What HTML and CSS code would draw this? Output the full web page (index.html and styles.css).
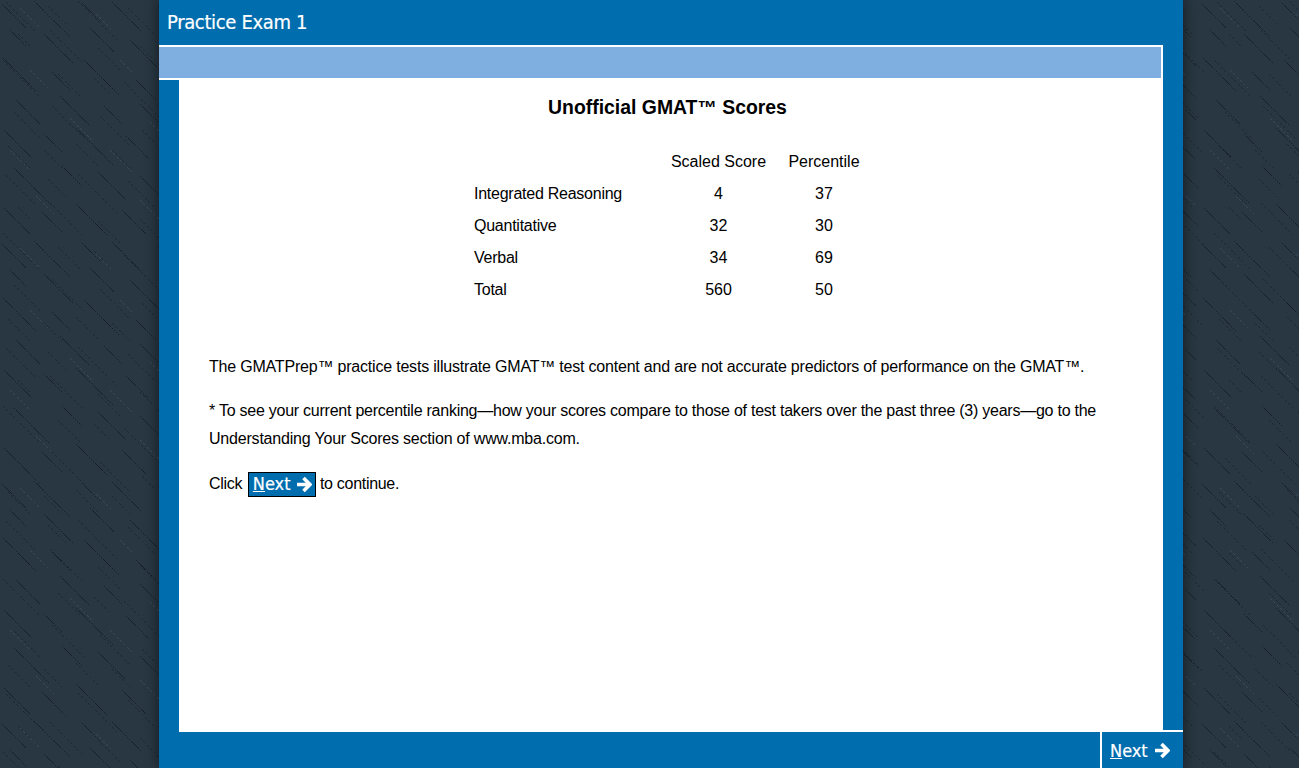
FILE: index.html
```html
<!DOCTYPE html>
<html lang="en">
<head>
<meta charset="utf-8">
<title>Practice Exam 1</title>
<link rel="stylesheet" href="styles.css">
</head>
<body>
<div class="frame">
  <header class="title">Practice Exam 1</header>
  <div class="band"></div>
  <main class="main">
    <h1 class="heading">Unofficial GMAT™ Scores</h1>
    <table class="scores">
      <colgroup><col class="col-name"><col class="col-num"><col class="col-num2"></colgroup>
      <tr><th></th><th>Scaled Score</th><th>Percentile</th></tr>
      <tr><td>Integrated Reasoning</td><td>4</td><td>37</td></tr>
      <tr><td>Quantitative</td><td>32</td><td>30</td></tr>
      <tr><td>Verbal</td><td>34</td><td>69</td></tr>
      <tr><td>Total</td><td>560</td><td>50</td></tr>
    </table>
    <p class="note first">The GMATPrep™ practice tests illustrate GMAT™ test content and are not accurate predictors of performance on the GMAT™.</p>
    <p class="note"><span class="tight">* To see your current percentile ranking—how your scores compare to those of test takers over the past three (3) years—go to the</span> Understanding Your Scores section of www.mba.com.</p>
    <p class="note click">Click <span class="inline-next"><span><u>N</u>ext</span><svg class="arrow" viewBox="0 0 16 17" aria-hidden="true"><path d="M1 8.5H12M7.5 2L14 8.5L7.5 15" fill="none" stroke="#fff" stroke-width="3.6"/></svg></span> to continue.</p>
  </main>
  <footer class="footer">
    <div class="next"><span><u>N</u>ext</span><svg class="arrow" viewBox="0 0 16 17" aria-hidden="true"><path d="M1 8.5H12M7.5 2L14 8.5L7.5 15" fill="none" stroke="#fff" stroke-width="3.6"/></svg></div>
  </footer>
</div>
</body>
</html>
```
FILE: styles.css
```css
html, body {
  margin: 0;
  height: 100%;
  overflow: hidden;
}
body {
  background-color: #283742;
  background-image:
    url("data:image/svg+xml,%3Csvg xmlns='http://www.w3.org/2000/svg' width='173' height='173' shape-rendering='crispEdges'%3E%3Cg stroke='%23121c24' stroke-width='1' stroke-dasharray='1 1' stroke-opacity='.55' fill='none'%3E%3Cpath d='M6 2l30 30M48 6l18 18M78 1l40 40M128 8l26 26M18 34l14 14M50 30l34 34M98 48l22 22M140 46l26 26M3 60l38 38M58 74l24 24M94 78l16 16M124 82l36 36M14 112l26 26M52 106l34 34M100 116l30 30M142 130l24 24M8 146l22 22M44 150l18 18M76 144l24 24M112 150l18 18'/%3E%3C/g%3E%3C/svg%3E"),
    url("data:image/svg+xml,%3Csvg xmlns='http://www.w3.org/2000/svg' width='240' height='240' shape-rendering='crispEdges'%3E%3Cg stroke='%230e171e' stroke-width='1' stroke-dasharray='2 1' stroke-opacity='.7' fill='none'%3E%3Cpath d='M2 4l24 24M34 1l36 36M82 3l18 18M112 2l30 30M158 6l22 22M196 2l36 36M10 30l16 16M44 34l30 30M90 28l24 24M130 40l34 34M182 30l20 20M214 44l22 22M3 58l34 34M52 72l18 18M84 60l36 36M136 80l20 20M172 62l32 32M216 78l20 20M16 100l24 24M60 96l30 30M104 106l18 18M140 104l36 36M192 100l22 22M226 110l10 10M4 130l28 28M44 134l18 18M76 128l38 38M126 136l22 22M164 142l30 30M206 130l30 30M14 168l36 36M62 166l20 20M98 172l28 28M140 176l18 18M176 180l34 34M222 172l16 16M4 208l26 26M42 212l20 20M76 204l32 32M122 210l24 24M160 216l20 20M196 222l16 16M220 208l18 18'/%3E%3C/g%3E%3Cg stroke='%2351687a' stroke-width='1' stroke-dasharray='1 1' stroke-opacity='.4' fill='none'%3E%3Cpath d='M20 8l20 20M96 14l16 16M170 10l24 24M30 70l18 18M120 60l14 14M206 56l20 20M70 118l22 22M150 122l18 18M10 150l20 20M110 150l24 24M200 160l14 14M36 196l18 18M140 200l20 20M226 196l10 10'/%3E%3C/g%3E%3C/svg%3E");
  font-family: "Liberation Sans", Arial, sans-serif;
  color: #000;
}
.frame {
  box-sizing: border-box;
  width: 1024px;
  height: 768px;
  margin-left: 159px;
  display: flex;
  flex-direction: column;
  background: #006dae;
  box-shadow: 0 0 12px 1px rgba(0, 0, 0, 0.45);
}
.title {
  height: 45px;
  flex: none;
  padding-left: 8px;
  font-family: "DejaVu Sans Condensed", "DejaVu Sans", sans-serif;
  font-stretch: condensed;
  font-size: 20px;
  letter-spacing: -0.35px;
  line-height: 44px;
  color: #fff;
  -webkit-text-stroke: 0.2px #fff;
}
.band {
  box-sizing: content-box;
  flex: none;
  width: 1002px;
  height: 31px;
  background: #7fafe1;
  border-top: 2px solid #fff;
  border-right: 2px solid #fff;
  border-bottom: 2px solid #fff;
}
.main {
  flex: none;
  box-sizing: border-box;
  width: 984px;
  height: 652px;
  margin-left: 20px;
  padding: 15px 7px 0 0;
  background: #fff;
  font-size: 16px;
}
.heading {
  margin: 0;
  font-size: 19.4px;
  line-height: 24px;
  font-weight: bold;
  text-align: center;
}
.scores {
  margin: 27px 0 0 295px;
  border-collapse: collapse;
  table-layout: fixed;
  width: 396px;
}
.col-name { width: 185px; }
.col-num { width: 119px; }
.col-num2 { width: 92px; }
.scores th,
.scores td {
  height: 32px;
  padding: 0;
  font-weight: normal;
  text-align: center;
}
.scores td:first-child {
  text-align: left;
  letter-spacing: -0.25px;
}
.note {
  margin: 0 30px 16px 30px;
  line-height: 28px;
  letter-spacing: -0.2px;
}
.tight {
  letter-spacing: -0.245px;
}
.note.first {
  margin-top: 47px;
}
.note.click {
  margin-top: 17px;
  letter-spacing: -0.3px;
}
.inline-next {
  display: inline-flex;
  box-sizing: border-box;
  align-items: center;
  gap: 5px;
  width: 68px;
  height: 25px;
  margin-left: 1.5px;
  padding-left: 4px;
  vertical-align: -1px;
  background: #006dae;
  border: 1px solid #000;
  color: #fff;
  font-family: "DejaVu Sans Condensed", "DejaVu Sans", sans-serif;
  font-stretch: condensed;
  font-size: 18px;
  letter-spacing: 0;
  -webkit-text-stroke: 0.2px #fff;
}
.arrow {
  width: 16px;
  height: 17px;
  flex: none;
}
.footer {
  flex: none;
  height: 36px;
  display: flex;
  justify-content: flex-end;
}
.next {
  box-sizing: border-box;
  display: flex;
  align-items: center;
  gap: 6px;
  width: 83px;
  height: 38px;
  margin-top: -2px;
  padding: 0 0 0 8px;
  background: #006dae;
  border-top: 2px solid #fff;
  border-left: 2px solid #fff;
  color: #fff;
  font-family: "DejaVu Sans Condensed", "DejaVu Sans", sans-serif;
  font-stretch: condensed;
  font-size: 18px;
  -webkit-text-stroke: 0.2px #fff;
}
```
